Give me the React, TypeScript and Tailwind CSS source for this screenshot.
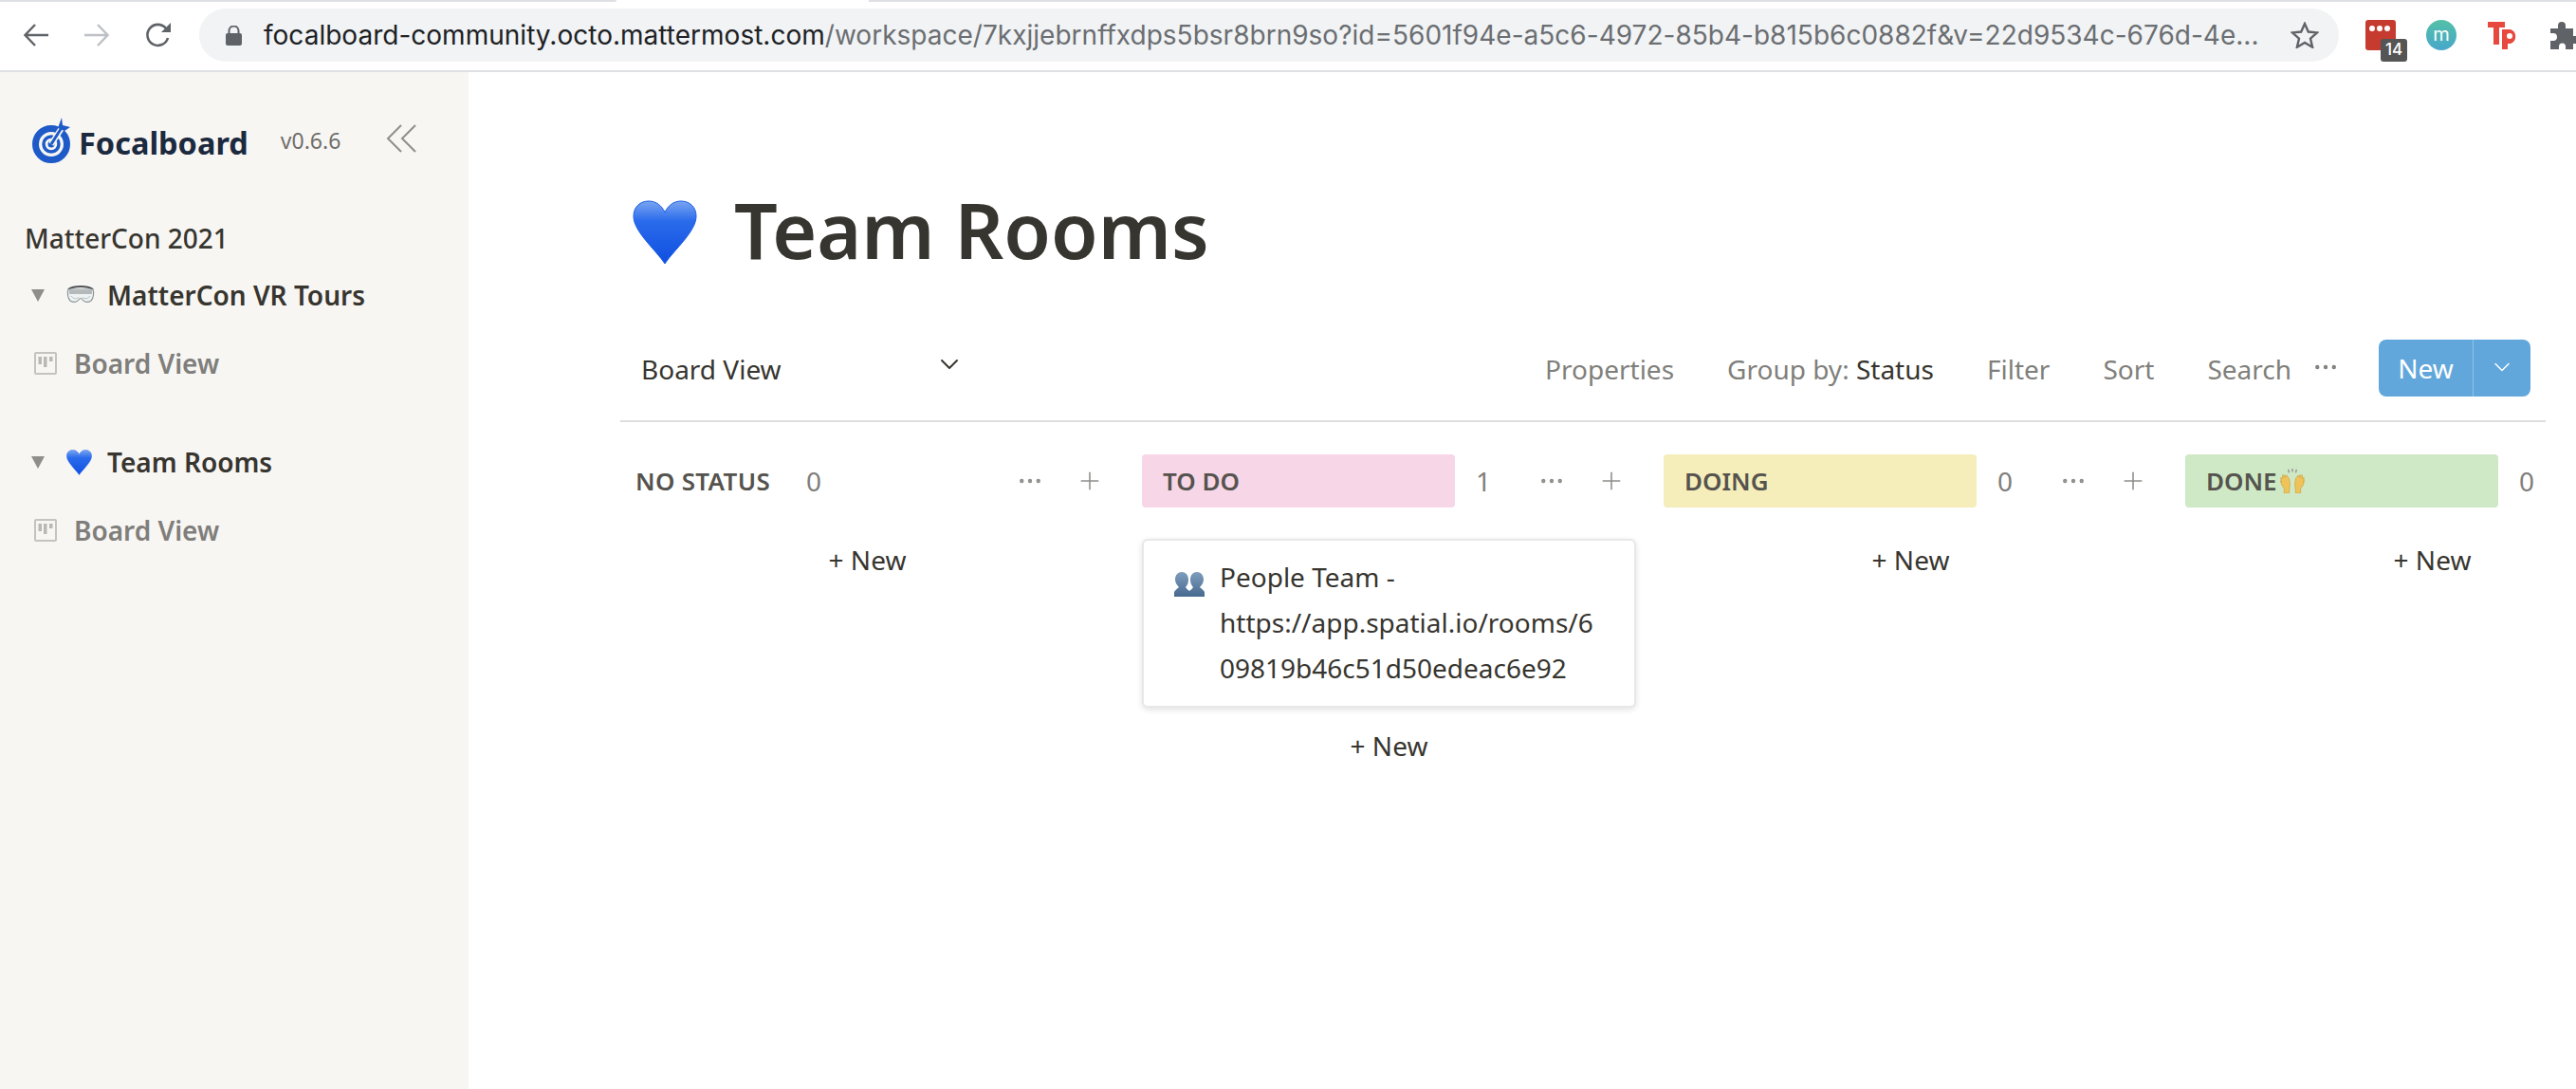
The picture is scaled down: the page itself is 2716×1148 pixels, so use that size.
import { ChevronDown, Plus, Ellipsis } from 'lucide-react';

const noto = "font-['Noto_Sans','Open_Sans',sans-serif]";

function Heart({ className }: { className: string }) {
  return (
    <svg viewBox="0 0 68 68" className={className}>
      <defs>
        <linearGradient id="heart-fill" x1="0" y1="0" x2="0" y2="1">
          <stop offset="0" stopColor="#7aa5f0" />
          <stop offset="0.32" stopColor="#2a6bec" />
          <stop offset="1" stopColor="#0f4fe0" />
        </linearGradient>
      </defs>
      <path
        d="M34 67C24 52 1 33 1 17 1 7 8 1 17 1c8 0 14 5 17 12C37 6 43 1 51 1c9 0 16 6 16 16 0 16-23 35-33 50z"
        fill="url(#heart-fill)"
        stroke="#1a5be6"
        strokeWidth="1"
      />
    </svg>
  );
}

function Goggles() {
  return (
    <svg viewBox="0 0 30 20" className="h-[20px] w-[30px]">
      <path d="M2 4C8 0 22 0 28 4" fill="none" stroke="#4f5253" strokeWidth="2" />
      <path
        d="M2 4h26c1 3 1 9-2 12-3 2-7 2-9-1-1-2-3-2-4 0-2 3-6 3-9 1C1 13 1 7 2 4z"
        fill="#eef2f2"
        stroke="#8d9495"
        strokeWidth="1.2"
      />
      <path d="M3 5h24v4H3z" fill="#b4b9b9" />
      <path d="M5 11c3 4 7 3 8 1M25 11c-3 4-7 3-8 1" fill="none" stroke="#b5c0c1" strokeWidth="1" />
    </svg>
  );
}

function BoardIcon() {
  return (
    <svg viewBox="0 0 24 24" className="h-[24px] w-[24px] shrink-0">
      <rect x="1" y="1" width="22" height="22" rx="1" fill="none" stroke="#c4c3c0" strokeWidth="2" />
      <path d="M4.500 5h3.500v8H4.500zM10 5h3.500v11H10zM16 5h3.500v5H16z" fill="#b9b8b5" />
    </svg>
  );
}

function SideTriangle() {
  return (
    <svg viewBox="0 0 14 13" className="h-[13px] w-[14px] shrink-0">
      <path d="M0 0h14L7 13z" fill="#8f8e8a" />
    </svg>
  );
}

function RaisedHands() {
  return (
    <svg viewBox="0 0 30 30" className="ml-[3px] h-[26px] w-[26px]">
      <path d="M10 1l1 4M15 0v4M20 1l-1 4" stroke="#9a9d96" strokeWidth="1.8" fill="none" />
      <path d="M1 16V11l2 1V8h3v3l2-3 3 4 1 6-1 12H5v-6c-2-2-4-5-4-9z" fill="#efc35a" stroke="#c99a35" strokeWidth="0.7" />
      <path d="M29 16V11l-2 1V8h-3v3l-2-3-3 4-1 6 1 12h6v-6c2-2 4-5 4-9z" fill="#efc35a" stroke="#c99a35" strokeWidth="0.7" />
    </svg>
  );
}

function People() {
  return (
    <svg viewBox="0 0 32 27" className="h-[27px] w-[32px] shrink-0">
      <defs>
        <linearGradient id="people-fill" x1="0" y1="0" x2="0" y2="1">
          <stop offset="0" stopColor="#7f9dbd" />
          <stop offset="1" stopColor="#47698f" />
        </linearGradient>
      </defs>
      <path
        d="M8 1c4 0 7 3 7 8 0 3-1 6-3 8 1 2 3 3 4 4V27H0v-5c1-2 3-3 5-5-2-2-4-5-4-8 0-5 3-8 7-8z"
        fill="url(#people-fill)"
      />
      <path
        d="M24 1c4 0 7 3 7 8 0 3-2 6-4 8 2 2 4 3 5 5v5H16v-6c1-1 3-2 4-4-2-2-3-5-3-8 0-5 3-8 7-8z"
        fill="url(#people-fill)"
      />
    </svg>
  );
}

function Logo() {
  return (
    <svg viewBox="0 0 40 48" className="h-[48px] w-[40px] shrink-0">
      <circle cx="20" cy="28" r="16.500" fill="none" stroke="#1e5bc8" strokeWidth="7" />
      <circle cx="20" cy="28" r="8" fill="none" stroke="#1e5bc8" strokeWidth="3.500" />
      <circle cx="20" cy="28" r="3.500" fill="#1e5bc8" />
      <path d="M20 28L33 8" stroke="#f7f6f3" strokeWidth="6" />
      <path d="M20 28L32 9" stroke="#1e5bc8" strokeWidth="3" />
      <path d="M31 0l1 8 8 2-6 4-7-3z" fill="#1e5bc8" />
    </svg>
  );
}

function BrowserBar() {
  return (
    <div className="relative flex h-[76px] items-center border-b-2 border-[#dfe0e3] bg-white font-['Inter',sans-serif]">
      <div className="absolute left-0 top-0 h-[2px] w-[650px] rounded-br-[4px] bg-[#dfe0e4]" />
      <div className="absolute right-0 top-0 h-[2px] w-[1800px] bg-[#dfe0e4]" />
      <svg viewBox="0 0 26 24" fill="none" className="ml-[25px] h-[24px] w-[26px] shrink-0">
        <path d="M26 12H2M12 1L1.500 12 12 23" stroke="#5f6368" strokeWidth="2.400" />
      </svg>
      <svg viewBox="0 0 26 24" fill="none" className="ml-[38px] h-[24px] w-[26px] shrink-0">
        <path d="M0 12h24M14 1l10.500 11L14 23" stroke="#bdc0c4" strokeWidth="2.400" />
      </svg>
      <svg viewBox="0 0 28 28" fill="none" className="ml-[38px] h-[28px] w-[28px] shrink-0">
        <path d="M24 17a11 11 0 1 1-2-10" stroke="#5f6368" strokeWidth="2.600" />
        <path d="M27 1v10H17z" fill="#5f6368" />
      </svg>
      <div className="ml-[29px] flex h-[56px] w-[2256px] shrink-0 items-center rounded-[28px] bg-[#f1f3f4] pl-[28px]">
        <svg viewBox="0 0 17 21" className="h-[21px] w-[17px] shrink-0">
          <path d="M3.500 8V5.500a5 5 0 0 1 10 0V8" fill="none" stroke="#5f6368" strokeWidth="2" />
          <rect y="8" width="17" height="13" rx="2" fill="#5f6368" />
        </svg>
        <div className="ml-[23px] w-[2107px] shrink-0 whitespace-nowrap text-[28px] tracking-[0.015px] text-[#202124]">
          focalboard-community.octo.mattermost.com
          <span className="text-[#6b6e72]">/workspace/7kxjjebrnffxdps5bsr8brn9so?id=5601f94e-a5c6-4972-85b4-b815b6c0882f&amp;v=22d9534c-676d-4e...</span>
        </div>
        <svg viewBox="0 0 30 28" fill="none" className="ml-[30px] h-[28px] w-[30px] shrink-0">
          <path d="M15 2l3.800 8.500 9.200.9-7 6.200 2.100 9.100L15 22l-8.100 4.700L9 17.600 2 11.400l9.200-.9z" stroke="#5f6368" strokeWidth="2.400" />
        </svg>
      </div>
      <div className="relative ml-[28px] h-[32px] w-[32px] shrink-0 rounded-[3px] bg-[#c63b30]">
        <div className="ml-[4px] flex h-[14px] items-center gap-[2px] pt-[4px]">
          <span className="h-[6px] w-[6px] rounded-full bg-white" />
          <span className="h-[6px] w-[6px] rounded-full bg-white" />
          <span className="h-[6px] w-[6px] rounded-full bg-white" />
        </div>
        <div className="absolute left-[16px] top-[20px] flex h-[24px] w-[28px] items-center justify-center rounded-[3px] bg-[#555555] text-[17px] font-medium text-white">
          14
        </div>
      </div>
      <div className="ml-[32px] flex h-[32px] w-[32px] shrink-0 items-center justify-center rounded-full bg-gradient-to-b from-[#54c0a6] to-[#48a7cb] pb-[3px] text-[20px] text-white">
        m
      </div>
      <div className="ml-[33px] flex w-[32px] shrink-0 items-start">
        <svg viewBox="0 0 32 30" className="h-[30px] w-[32px]">
          <path d="M0 1h18v6h-6v18H6V7H0z" fill="#e8493f" />
          <path d="M15 9h9a8 8 0 0 1 0 15h-3v6h-6z" fill="#e8493f" />
          <circle cx="23" cy="16" r="3" fill="white" />
        </svg>
      </div>
      <svg viewBox="0 0 28 30" className="ml-[34px] h-[30px] w-[28px] shrink-0">
        <path d="M0 8h8V5a4 4 0 0 1 8 0v3h8v8h3a4 4 0 0 1 0 8h-3v6h-8v-3a3.500 3.500 0 0 0-7 0v3H0v-9h3a4 4 0 0 0 0-8H0z" fill="#5f6368" />
      </svg>
    </div>
  );
}

function Sidebar() {
  return (
    <aside className={`w-[494px] shrink-0 bg-[#f7f6f3] ${noto}`}>
      <div className="flex h-[96px] items-end pl-[34px]">
        <Logo />
        <span className="ml-[9px] translate-y-[3px] text-[32.500px] font-bold leading-[48px] text-[#1c2a3f]">Focalboard</span>
        <span className="ml-[34px] pb-[9px] text-[23px] leading-[30px] text-[#6f6e6a]">v0.6.6</span>
        <svg viewBox="0 0 32 30" fill="none" className="mb-[11px] ml-[48px] h-[30px] w-[32px]">
          <path d="M16 1L2 15l14 14M31 1L17 15l14 14" stroke="#8f8e8a" strokeWidth="2" />
        </svg>
      </div>
      <div className="mt-[61px] pl-[26px] text-[28px] font-medium leading-[36px] text-[#37352f]">MatterCon 2021</div>
      <div className="mt-[18px] flex h-[48px] items-center pl-[33px]">
        <SideTriangle />
        <span className="ml-[23px]"><Goggles /></span>
        <span className="ml-[13px] text-[28px] font-semibold text-[#37352f]">MatterCon VR Tours</span>
      </div>
      <div className="mt-[24px] flex h-[48px] items-center pl-[36px]">
        <BoardIcon />
        <span className="ml-[18px] text-[28px] font-semibold text-[#7f7e7b]">Board View</span>
      </div>
      <div className="mt-[56px] flex h-[48px] items-center pl-[33px]">
        <SideTriangle />
        <span className="ml-[23px]"><Heart className="h-[27px] w-[27px]" /></span>
        <span className="ml-[16px] text-[28px] font-semibold text-[#37352f]">Team Rooms</span>
      </div>
      <div className="mt-[24px] flex h-[48px] items-center pl-[36px]">
        <BoardIcon />
        <span className="ml-[18px] text-[28px] font-semibold text-[#7f7e7b]">Board View</span>
      </div>
    </aside>
  );
}

function Toolbar() {
  return (
    <div className="mr-[32px] flex h-[91px] items-start border-b-2 border-[#dedede] pt-[6px] text-[28px]">
      <div className="ml-[22px] mt-[9px] flex w-[341px] items-start leading-[40px] text-[#37352f]">
        <span>Board View</span>
        <ChevronDown className="ml-auto mt-[-1px] h-[32px] w-[32px]" strokeWidth={1.5} />
      </div>
      <div className="ml-auto mt-[9px] flex items-start leading-[40px] text-[#807f7b]">
        <span>Properties</span>
        <span className="ml-[56px]">
          Group by: <span className="text-[#37352f]">Status</span>
        </span>
        <span className="ml-[56px]">Filter</span>
        <span className="ml-[56px]">Sort</span>
        <span className="ml-[56px]">Search</span>
        <Ellipsis className="ml-[21px] mt-[3px] h-[30px] w-[30px]" strokeWidth={1.5} />
      </div>
      <div className="ml-[41px] mr-[16px] mt-[-2px] flex h-[60px] w-[160px] items-stretch rounded-[8px] bg-[#62a7db] text-white">
        <span className="flex w-[99px] items-center justify-center leading-none">New</span>
        <span className="flex flex-1 items-center justify-center border-l border-[#8fc1e6] pb-[3px]">
          <ChevronDown className="h-[28px] w-[28px]" strokeWidth={1.25} />
        </span>
      </div>
    </div>
  );
}

type Column = {
  name: string;
  count: number;
  bg?: string;
  icon?: boolean;
  cards?: boolean;
};

const columns: Column[] = [
  { name: 'NO STATUS', count: 0 },
  { name: 'TO DO', count: 1, bg: 'bg-[#f7d6e7]', cards: true },
  { name: 'DOING', count: 0, bg: 'bg-[#f5eebb]' },
  { name: 'DONE', count: 0, bg: 'bg-[#cfe8c5]', icon: true },
];

function ColumnHead({ col }: { col: Column }) {
  return (
    <div className="flex h-[56px] w-[521px] shrink-0 items-center">
      {col.bg ? (
        <div className={`flex h-[56px] w-[330px] shrink-0 items-center rounded-[4px] pl-[22px] text-[26px] font-semibold text-[#55534e] ${col.bg}`}>
          {col.name}
          {col.icon && <RaisedHands />}
        </div>
      ) : (
        <div className="w-[192px] shrink-0 pl-[16px] text-[26px] font-semibold tracking-[0.3px] text-[#55534e]">{col.name}</div>
      )}
      <span className={`${col.bg ? 'ml-[22px]' : 'ml-[4px]'} w-[16px] text-[28px] leading-none text-[#7f7e7b]`}>{col.count}</span>
      <Ellipsis className="ml-auto h-[30px] w-[30px] text-[#8f8e8a]" strokeWidth={1.5} />
      <Plus className="ml-[33px] mr-[11px] h-[30px] w-[30px] text-[#8f8e8a]" strokeWidth={1.25} />
    </div>
  );
}

function Board() {
  return (
    <div className="mt-[34px] flex gap-[29px]">
      {columns.map((col) => (
        <div key={col.name} className="flex w-[521px] shrink-0 flex-col">
          <ColumnHead col={col} />
          {col.cards && (
            <div className="mt-[33px] flex h-[178px] gap-[16px] rounded-[6px] border-2 border-[#e8e8e7] bg-white pl-[32px] pt-[14px] text-[28px] leading-[48px] text-[#37352f] shadow-[0_2px_6px_rgba(0,0,0,0.12)]">
              <span className="mt-[18px]"><People /></span>
              <span className="w-[400px] break-all">
                <span className="block">People Team -</span>
                https://app.spatial.io/rooms/609819b46c51d50edeac6e92
              </span>
            </div>
          )}
          <div className={`${col.cards ? 'mt-[20px]' : 'mt-[35px]'} text-center text-[28px] leading-[40px] text-[#37352f]`}>+ New</div>
        </div>
      ))}
    </div>
  );
}

export default function App() {
  return (
    <div className="flex h-[1148px] w-[2716px] flex-col overflow-hidden bg-white">
      <BrowserBar />
      <div className="flex flex-1">
        <Sidebar />
        <main className={`min-w-0 flex-1 overflow-hidden pl-[160px] ${noto}`}>
          <div className="flex h-[190px] items-start pt-[133px]">
            <span className="ml-[13px] mt-[2px]"><Heart className="h-[68px] w-[68px]" /></span>
            <h1 className="ml-[39px] mt-[-22px] text-[80.500px] font-semibold leading-[110px] text-[#37352f]">Team Rooms</h1>
          </div>
          <div className="mt-[88px]" />
          <Toolbar />
          <Board />
        </main>
      </div>
    </div>
  );
}
